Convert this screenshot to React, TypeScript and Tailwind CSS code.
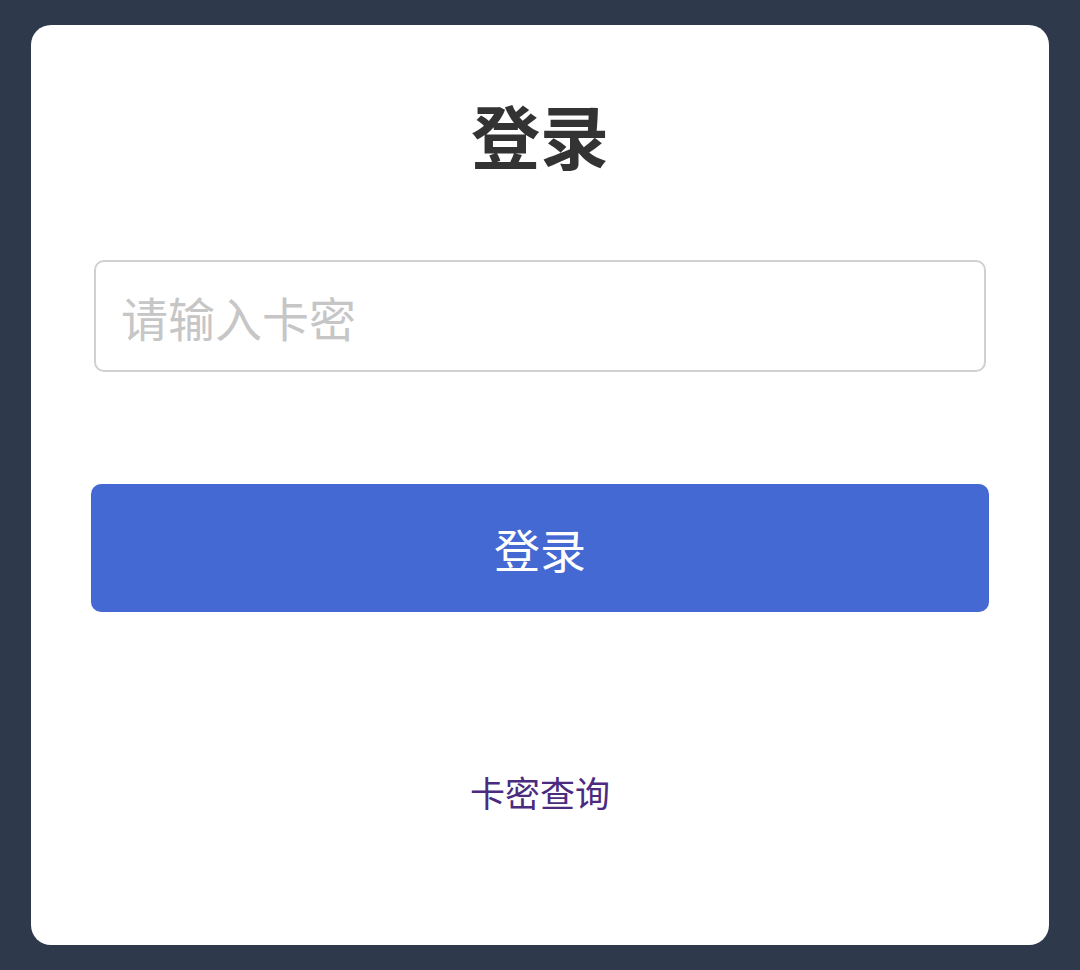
import React from "react";

export default function App() {
  return (
    <div
      className="w-[1080px] h-[970px] bg-[#2e3a4c] px-[31px] py-[25px]"
      style={{ fontFamily: '"Noto Sans CJK SC", "Noto Sans", sans-serif' }}
    >
      <div className="h-[920px] w-full bg-white rounded-[20px] px-[60px] pt-[68px] flex flex-col">
        <h1 className="text-center text-[69px] leading-[82px] font-bold text-[#333333]">登录</h1>
        <input
          type="text"
          placeholder="请输入卡密"
          className="mt-[85px] mx-[3px] h-[112px] rounded-[10px] border-2 border-[#d0d0d0] px-[25px] text-[47px] text-[#333] placeholder:text-[#c6c6c6] outline-none"
        />
        <button className="mt-[112px] h-[128px] w-full rounded-[10px] bg-[#4569d3] text-white text-[46px] leading-none">
          登录
        </button>
        <div className="mt-[154px] text-center">
          <a href="#" className="text-[35px] leading-[52px] text-[#4b2b7f]">卡密查询</a>
        </div>
      </div>
    </div>
  );
}
